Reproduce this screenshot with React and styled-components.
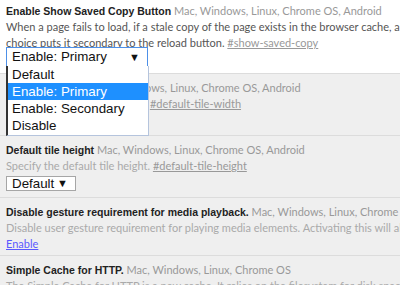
import React from 'react'
import styled, { createGlobalStyle } from 'styled-components'

const GlobalStyle = createGlobalStyle`
  html, body {
    margin: 0;
    padding: 0;
    background: #fff;
    overflow: hidden;
  }
  body {
    font-family: Lato, "Open Sans", sans-serif;
    font-size: 11px;
    color: #333;
  }
`

const Page = styled.div`
  width: 700px;
`

const Experiment = styled.div`
  position: relative;
  background: ${props => (props.current ? '#fff' : '#efefef')};
  border-bottom: 1px solid #dcdcdc;
  padding: ${props => (props.current ? '3px 6px 6px' : '6px 6px 3px')};
  line-height: 16px;
`

const Line = styled.div`
  white-space: nowrap;
`

const Name = styled.span`
  font-family: "Liberation Sans", Arial, sans-serif;
  font-size: 10.5px;
  font-weight: bold;
  color: #222;
`

const Platforms = styled.span`
  color: #999;
`

const Description = styled.div`
  white-space: nowrap;
  color: ${props => (props.current ? '#555' : '#aaa')};
`

const Permalink = styled.a`
  color: #999;
  text-decoration: underline;
`

const ActionLink = styled.a`
  color: #5a5aff;
  text-decoration: underline;
`

const SelectBox = styled.div`
  position: relative;
  box-sizing: border-box;
  width: ${props => props.width}px;
  height: ${props => (props.focused ? 20 : 15)}px;
  margin: ${props => (props.focused ? '-4px 0 0' : '2px 0 3px')};
  border: 1px solid ${props => (props.focused ? '#4d90e8' : '#a6a6a6')};
  background: #fff;
  font-family: "Liberation Sans", Arial, sans-serif;
  font-size: 13.33px;
  line-height: ${props => (props.focused ? 18 : 13)}px;
  color: #111;
  padding-left: 5px;
`

const Arrow = styled.span`
  position: absolute;
  right: 7px;
  top: 0;
  font-size: 11px;
`

const Dropdown = styled.ul`
  position: absolute;
  z-index: 2;
  left: -1px;
  top: 100%;
  box-sizing: border-box;
  width: 143px;
  margin: 0;
  padding: 0 0 1px;
  list-style: none;
  background: #fff;
  border: 1px solid #b5c4dd;
  border-top: none;
  border-left: 2px solid #333;
  font-family: "Liberation Sans", Arial, sans-serif;
  font-size: 13.33px;
  line-height: 17px;
`

const Option = styled.li`
  padding-left: 4px;
  background: ${props => (props.selected ? '#1e90ff' : 'transparent')};
  color: ${props => (props.selected ? '#fff' : '#111')};
`

const Select = ({ value, width, focused, options }) => (
  <SelectBox width={width} focused={focused}>
    {value}
    <Arrow>▼</Arrow>
    {options && (
      <Dropdown>
        {options.map(opt => (
          <Option key={opt} selected={opt === value}>
            {opt}
          </Option>
        ))}
      </Dropdown>
    )}
  </SelectBox>
)

const ALL = 'Mac, Windows, Linux, Chrome OS, Android'

const App = () => (
  <Page>
    <GlobalStyle />
    <Experiment current>
      <Line>
        <Name>Enable Show Saved Copy Button</Name> <Platforms>{ALL}</Platforms>
      </Line>
      <Description current>
        When a page fails to load, if a stale copy of the page exists in the browser cache, a button will be presented to allow the user to load that stale copy. The secondary enabling
        <br />
        choice puts it secondary to the reload button.{' '}
        <Permalink>#show-saved-copy</Permalink>
      </Description>
      <Select
        focused
        width={142}
        value="Enable: Primary"
        options={['Default', 'Enable: Primary', 'Enable: Secondary', 'Disable']}
      />
    </Experiment>
    <Experiment>
      <Line>
        <Name>Default tile width</Name> <Platforms>{ALL}</Platforms>
      </Line>
      <Description>
        Specify the default tile width. <Permalink>#default-tile-width</Permalink>
      </Description>
      <Select width={70} value="Default" />
    </Experiment>
    <Experiment>
      <Line>
        <Name>Default tile height</Name> <Platforms>{ALL}</Platforms>
      </Line>
      <Description>
        Specify the default tile height. <Permalink>#default-tile-height</Permalink>
      </Description>
      <Select width={70} value="Default" />
    </Experiment>
    <Experiment>
      <Line>
        <Name>Disable gesture requirement for media playback.</Name>{' '}
        <Platforms>{ALL}</Platforms>
      </Line>
      <Description>
        Disable user gesture requirement for playing media elements. Activating this will allow autoplay to work.
      </Description>
      <Line>
        <ActionLink>Enable</ActionLink>
      </Line>
    </Experiment>
    <Experiment>
      <Line>
        <Name>Simple Cache for HTTP.</Name>{' '}
        <Platforms>Mac, Windows, Linux, Chrome OS</Platforms>
      </Line>
      <Description>
        The Simple Cache for HTTP is a new cache. It relies on the filesystem for disk space allocation.
      </Description>
    </Experiment>
  </Page>
)

export default App
